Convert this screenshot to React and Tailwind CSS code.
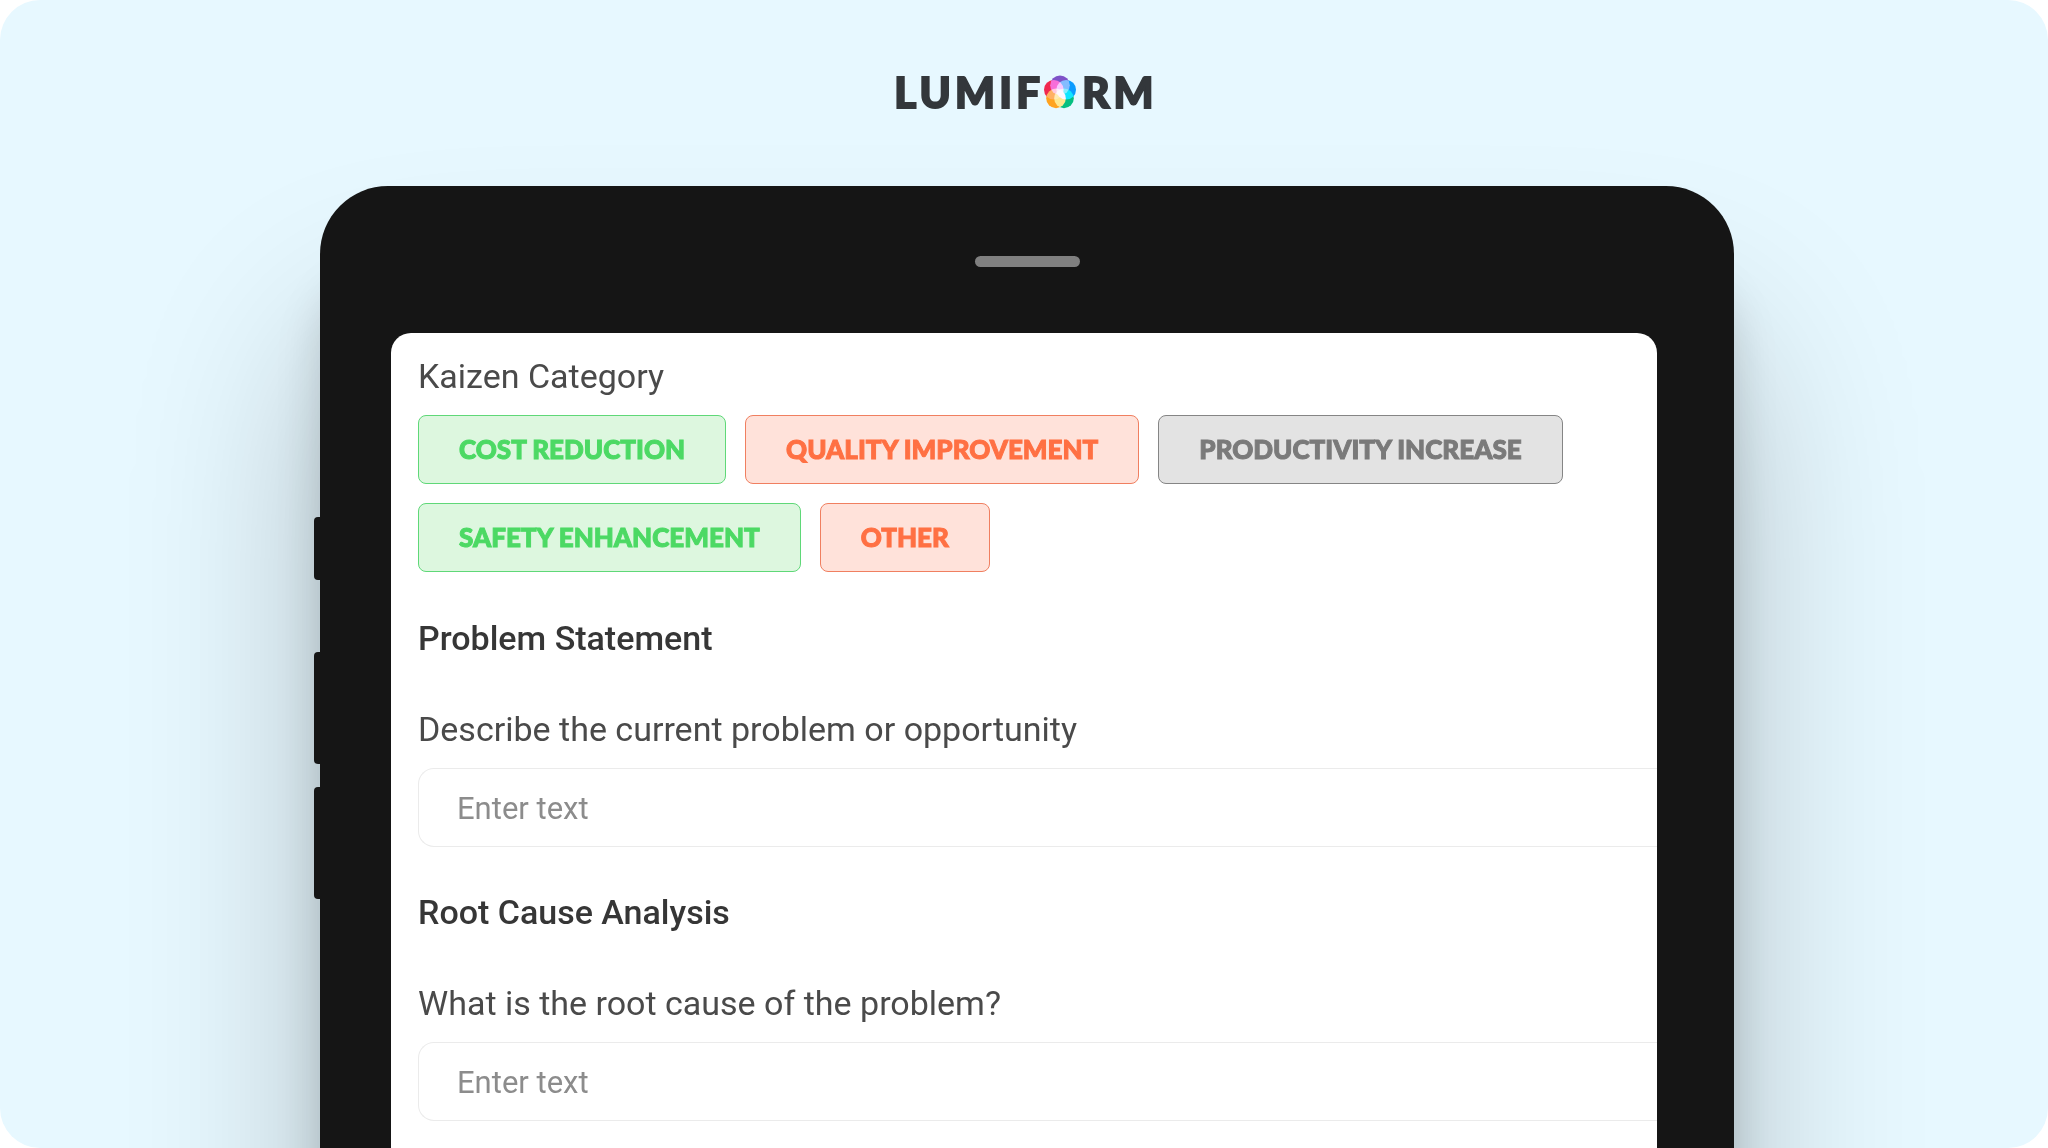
import { useId } from "react";

const TONES = {
  green: "border-[#5fd878] bg-[#ddf7df] text-[#4cd964]",
  orange: "border-[#f07f60] bg-[#ffe2da] text-[#ff7043]",
  gray: "border-[#858585] bg-[#e3e3e3] text-[#7a7a7a]",
};

const CATEGORIES = [
  { label: "COST REDUCTION", tone: "green" },
  { label: "QUALITY IMPROVEMENT", tone: "orange" },
  { label: "PRODUCTIVITY INCREASE", tone: "gray" },
  { label: "SAFETY ENHANCEMENT", tone: "green" },
  { label: "OTHER", tone: "orange" },
];

const PETALS = [
  { cx: 16, cy: 10.2, fill: "#7e52c8" },
  { cx: 22.2, cy: 14.8, fill: "#0c9cff" },
  { cx: 20, cy: 23.4, fill: "#05bf80" },
  { cx: 12, cy: 23.4, fill: "#ffa31f" },
  { cx: 9.8, cy: 14.8, fill: "#f0284f" },
];

function LogoOrb() {
  return (
    <svg viewBox="0 0 32 34" className="h-[34px] w-8" aria-hidden="true">
      <g className="isolate">
        {PETALS.map((petal) => (
          <circle key={petal.fill} r="9.8" className="mix-blend-screen" {...petal} />
        ))}
      </g>
    </svg>
  );
}

function Logo() {
  return (
    <div className="flex items-center justify-center pl-1 font-['Lato'] text-[42px] leading-[44px] font-black tracking-widest text-[#33373b] [-webkit-text-stroke:2px_currentColor]">
      <span>LUMIF</span>
      <LogoOrb />
      <span className="pl-1.5">RM</span>
    </div>
  );
}

function Question({ title, label }) {
  const id = useId();
  return (
    <section className="flex flex-col">
      <h2 className="text-[34px] leading-10 font-medium text-[#363636]">{title}</h2>
      <label htmlFor={id} className="mt-[51px] text-[34px] leading-10">
        {label}
      </label>
      <input
        id={id}
        type="text"
        placeholder="Enter text"
        className="mt-[19px] h-[79px] rounded-l-2xl border border-r-0 border-[#ebebeb] bg-white px-[38px] pt-0.5 text-[31px] outline-none placeholder:text-[#8c8c8c]"
      />
    </section>
  );
}

export default function App() {
  return (
    <div className="bg-white">
      <main className="flex min-h-screen flex-col overflow-hidden rounded-[40px] bg-[#e7f8ff] font-['Roboto',sans-serif] text-[#4a4a4a]">
        <header className="pt-[70px] pb-[72px]">
          <Logo />
        </header>
        <div className="flex flex-1 px-[314px]">
          <div className="z-10 flex w-1.5 flex-col pt-[331px]">
            <span className="h-[63px] rounded-l bg-[#151515]" />
            <span className="mt-[72px] h-28 rounded-l bg-[#151515]" />
            <span className="mt-[23px] h-28 rounded-l bg-[#151515]" />
          </div>
          <div className="-mb-60 flex flex-1 flex-col rounded-[68px] bg-[#151515] shadow-[0_150px_190px_rgba(0,0,0,0.24),0_90px_45px_rgba(0,0,0,0.15)]">
            <div className="mx-auto mt-[70px] h-[11px] w-[105px] rounded-full bg-[#808080]" />
            <div className="mt-[66px] mr-[77px] ml-[71px] flex flex-1 flex-col rounded-t-[20px] bg-white pt-[23px] pb-60 pl-[27px]">
              <p className="text-[34px] leading-10">Kaizen Category</p>
              <div className="mt-[19px] flex flex-wrap gap-[19px] pr-16">
                {CATEGORIES.map(({ label, tone }) => (
                  <button
                    key={label}
                    type="button"
                    className={`h-[69px] rounded-lg border px-10 pb-0.5 font-['Lato'] text-[26px] leading-8 font-black [-webkit-text-stroke:1px_currentColor] ${TONES[tone]}`}
                  >
                    {label}
                  </button>
                ))}
              </div>
              <div className="mt-[46px] flex flex-col gap-[45px]">
                <Question title="Problem Statement" label="Describe the current problem or opportunity" />
                <Question title="Root Cause Analysis" label="What is the root cause of the problem?" />
              </div>
            </div>
          </div>
        </div>
      </main>
    </div>
  );
}
